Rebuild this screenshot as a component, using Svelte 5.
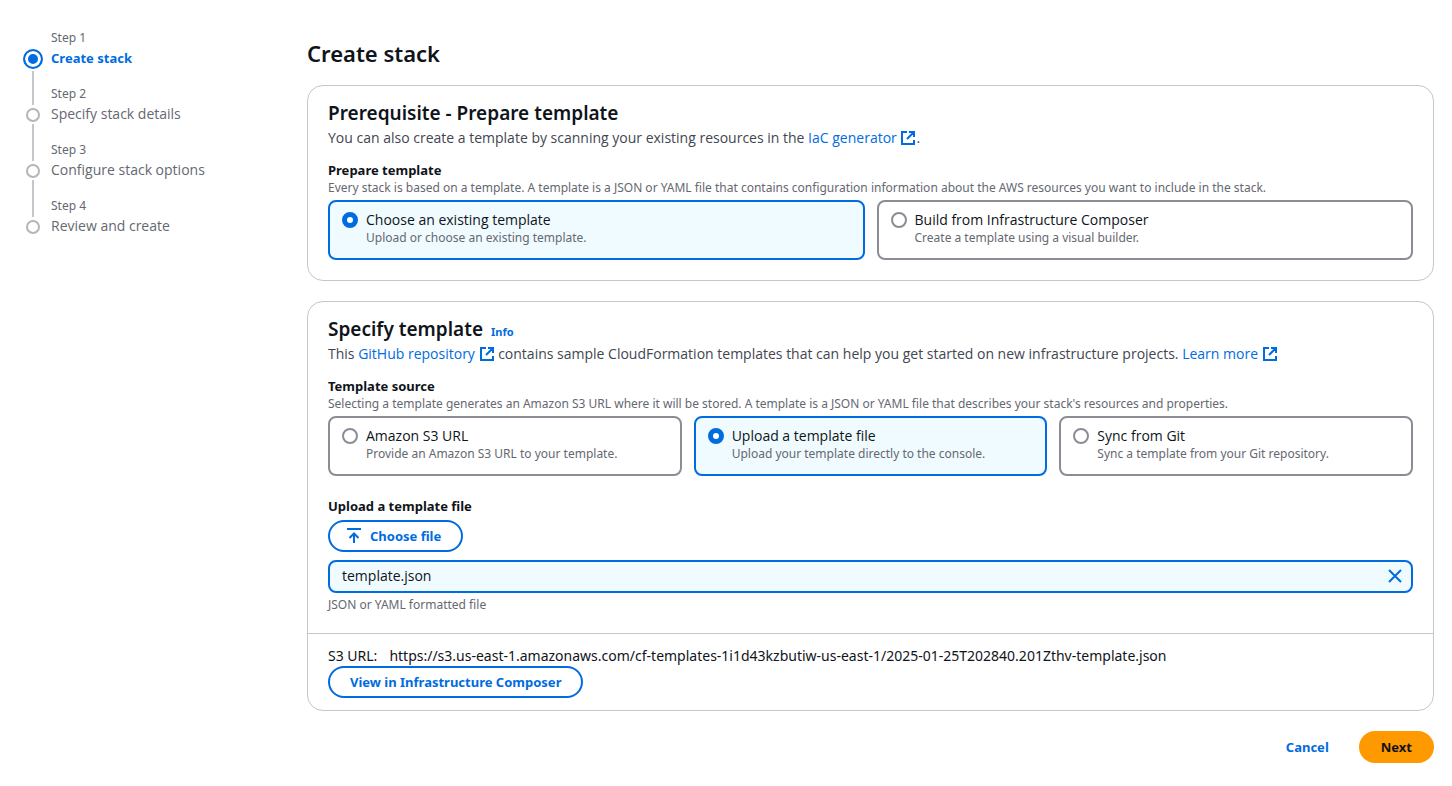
<script>
  const steps = [
    'Create stack',
    'Specify stack details',
    'Configure stack options',
    'Review and create'
  ];
  const current = 0;

  const prepareOptions = [
    { value: 'existing', label: 'Choose an existing template', description: 'Upload or choose an existing template.' },
    { value: 'composer', label: 'Build from Infrastructure Composer', description: 'Create a template using a visual builder.' }
  ];

  const sourceOptions = [
    { value: 's3', label: 'Amazon S3 URL', description: 'Provide an Amazon S3 URL to your template.' },
    { value: 'upload', label: 'Upload a template file', description: 'Upload your template directly to the console.' },
    { value: 'git', label: 'Sync from Git', description: 'Sync a template from your Git repository.' }
  ];

  let prepare = $state('existing');
  let source = $state('upload');
  let fileName = $state('template.json');
</script>

{#snippet external()}
  <svg class="external" viewBox="0 0 16 16" aria-hidden="true">
    <path d="M7 2H2v12h12v-4M9 2h5v5M13.500 2.500 7 9" />
  </svg>
{/snippet}

{#snippet tile(name, option, selected, choose)}
  <label class="tile" class:selected>
    <input type="radio" {name} value={option.value} checked={selected} onchange={choose} />
    <span class="tile-text">
      <span class="tile-label">{option.label}</span>
      <span class="hint">{option.description}</span>
    </span>
  </label>
{/snippet}

<div class="page">
  <nav aria-label="Steps">
    <ol>
      {#each steps as step, i}
        <li class:active={i === current}>
          <span class="track">
            <span class="dot"></span>
            {#if i < steps.length - 1}<span class="line"></span>{/if}
          </span>
          <span class="step-text">
            <span class="step-number">Step {i + 1}</span>
            <a class="step-title" href="#step-{i + 1}">{step}</a>
          </span>
        </li>
      {/each}
    </ol>
  </nav>

  <main>
    <h1>Create stack</h1>

    <section class="card">
      <div class="body">
        <h2>Prerequisite - Prepare template</h2>
        <p class="intro">
          You can also create a template by scanning your existing resources in the
          <a href="#iac">IaC generator {@render external()}</a>.
        </p>
        <fieldset>
          <legend>Prepare template</legend>
          <p class="hint">Every stack is based on a template. A template is a JSON or YAML file that contains configuration information about the AWS resources you want to include in the stack.</p>
          <div class="tiles two">
            {#each prepareOptions as option}
              {@render tile('prepare', option, prepare === option.value, () => (prepare = option.value))}
            {/each}
          </div>
        </fieldset>
      </div>
    </section>

    <section class="card">
      <div class="body">
        <div class="heading">
          <h2>Specify template</h2>
          <a class="info" href="#info">Info</a>
        </div>
        <p class="intro">
          This <a href="#github">GitHub repository {@render external()}</a> contains sample CloudFormation templates that can help you get started on new infrastructure projects.
          <a href="#learn">Learn more {@render external()}</a>
        </p>
        <fieldset>
          <legend>Template source</legend>
          <p class="hint">Selecting a template generates an Amazon S3 URL where it will be stored. A template is a JSON or YAML file that describes your stack's resources and properties.</p>
          <div class="tiles three">
            {#each sourceOptions as option}
              {@render tile('source', option, source === option.value, () => (source = option.value))}
            {/each}
          </div>
        </fieldset>

        <div class="upload">
          <h3>Upload a template file</h3>
          <button class="outline" type="button">
            <svg class="icon" viewBox="0 0 16 16" aria-hidden="true">
              <path d="M1 1h14M8 15V6M3.500 10 8 5.500l4.500 4.500" />
            </svg>
            Choose file
          </button>
          {#if fileName}
            <div class="file">
              <span>{fileName}</span>
              <button class="remove" type="button" aria-label="Remove file" onclick={() => (fileName = '')}>
                <svg class="icon" viewBox="0 0 16 16" aria-hidden="true">
                  <path d="m2 2 12 12M14 2 2 14" />
                </svg>
              </button>
            </div>
          {/if}
          <p class="hint">JSON or YAML formatted file</p>
        </div>
      </div>

      <div class="card-footer">
        <p class="url"><span>S3 URL:</span><span>https://s3.us-east-1.amazonaws.com/cf-templates-1i1d43kzbutiw-us-east-1/2025-01-25T202840.201Zthv-template.json</span></p>
        <button class="outline" type="button">View in Infrastructure Composer</button>
      </div>
    </section>

    <div class="actions">
      <button class="plain" type="button">Cancel</button>
      <button class="primary" type="button">Next</button>
    </div>
  </main>
</div>

<style>
  :global(body) {
    background: #fff;
  }

  .page {
    display: grid;
    grid-template-columns: 264px minmax(0, 1fr);
    gap: 20px;
    padding: 30px 18px 22px 23px;
    color: #0f141a;
    font: 13px/20px 'Noto Sans', 'Open Sans', sans-serif;
  }

  h1, h2, h3, p, ol, fieldset, legend {
    margin: 0;
    padding: 0;
    border: 0;
  }

  ol {
    list-style: none;
  }

  a {
    color: #006ce0;
    text-decoration: none;
  }

  button {
    font: inherit;
    font-weight: 700;
    cursor: pointer;
  }

  /* Step navigation */
  li {
    display: flex;
    gap: 8px;
    height: 56px;
  }

  .track {
    display: flex;
    flex-direction: column;
    align-items: center;
    width: 20px;
    height: 56px;
    margin-top: 19px;
  }

  .dot {
    box-sizing: border-box;
    flex: none;
    width: 14px;
    height: 14px;
    margin-top: 3px;
    border: 2px solid #b4b4bb;
    border-radius: 50%;
  }

  .active .dot {
    width: 20px;
    height: 20px;
    margin-top: 0;
    border-color: #006ce0;
    background: #006ce0;
    box-shadow: inset 0 0 0 3px #fff;
  }

  .line {
    flex: 1;
    width: 2px;
    margin-top: 2px;
    background: #c6c6cd;
  }

  .step-text {
    display: flex;
    flex-direction: column;
    gap: 2px;
  }

  .step-number {
    color: #656871;
    font-size: 12px;
    line-height: 16px;
  }

  .step-title {
    color: #656871;
  }

  .step-title,
  .intro,
  .tile-label,
  .file {
    font-family: 'Open Sans', 'Noto Sans', sans-serif;
    font-size: 14px;
  }

  .active .step-title {
    color: #006ce0;
    font-family: 'Noto Sans', 'Open Sans', sans-serif;
    font-size: 13px;
    font-weight: 700;
  }

  /* Content */
  main {
    padding-top: 8px;
  }

  h1 {
    margin-bottom: 17px;
    font-size: 22px;
    font-weight: 600;
    line-height: 30px;
  }

  h2 {
    font-size: 19px;
    font-weight: 600;
    line-height: 24px;
  }

  h3, legend {
    font-size: 13px;
    font-weight: 700;
    line-height: 20px;
  }

  .card {
    margin-bottom: 20px;
    border: 1px solid #c6c6cd;
    border-radius: 16px;
  }

  .body {
    padding: 15px 20px 20px;
  }

  .heading {
    display: flex;
    align-items: baseline;
    gap: 8px;
  }

  .info {
    font-size: 11px;
    font-weight: 700;
    line-height: 16px;
  }

  .intro {
    margin: 3px 0 12px;
    color: #424650;
  }

  .hint {
    color: #656871;
    font-size: 12px;
    line-height: 16px;
  }

  .external,
  .icon {
    width: 16px;
    height: 16px;
    fill: none;
    stroke: currentColor;
    stroke-width: 2;
  }

  .external {
    vertical-align: -3px;
  }

  .tiles {
    display: grid;
    gap: 12px;
    margin-top: 4px;
  }

  .two {
    grid-template-columns: repeat(2, 1fr);
  }

  .three {
    grid-template-columns: repeat(3, 1fr);
  }

  .tile {
    display: flex;
    gap: 8px;
    padding: 8px 12px 12px;
    border: 2px solid #8c8c94;
    border-radius: 8px;
    cursor: pointer;
  }

  .tile.selected {
    border-color: #006ce0;
    background: #f0fbff;
  }

  .tile input {
    appearance: none;
    box-sizing: border-box;
    flex: none;
    width: 16px;
    height: 16px;
    margin: 2px 0 0;
    border: 2px solid #8c8c94;
    border-radius: 50%;
    background: #fff;
  }

  .tile input:checked {
    border: 5px solid #006ce0;
  }

  .tile-text {
    display: flex;
    flex-direction: column;
  }

  .upload {
    display: flex;
    flex-direction: column;
    align-items: flex-start;
    margin-top: 20px;
  }

  .outline {
    display: flex;
    align-items: center;
    gap: 8px;
    box-sizing: border-box;
    height: 32px;
    padding: 0 20px;
    border: 2px solid #006ce0;
    border-radius: 16px;
    background: #fff;
    color: #006ce0;
  }

  .upload .outline {
    margin: 4px 0 8px;
    padding: 0 20px 0 16px;
  }

  .file {
    display: flex;
    align-items: center;
    justify-content: space-between;
    box-sizing: border-box;
    width: 100%;
    height: 33px;
    margin-bottom: 4px;
    padding: 0 8px 1px 12px;
    border: 2px solid #006ce0;
    border-radius: 8px;
    background: #f0fbff;
  }

  .remove {
    display: flex;
    padding: 0;
    border: 0;
    background: none;
    color: #006ce0;
  }

  .card-footer {
    padding: 12px 20px;
    border-top: 1px solid #c6c6cd;
  }

  .url {
    display: flex;
    gap: 12px;
    font-size: 14px;
  }

  .url span {
    min-width: 0;
    overflow-wrap: anywhere;
  }

  .url span:first-child {
    flex: none;
  }

  .actions {
    display: flex;
    justify-content: flex-end;
    gap: 8px;
  }

  .plain,
  .primary {
    height: 32px;
    padding: 0 22px;
    border: 0;
    border-radius: 16px;
    background: none;
    color: #006ce0;
  }

  .primary {
    background: #ff9900;
    color: #0f141a;
  }
</style>
